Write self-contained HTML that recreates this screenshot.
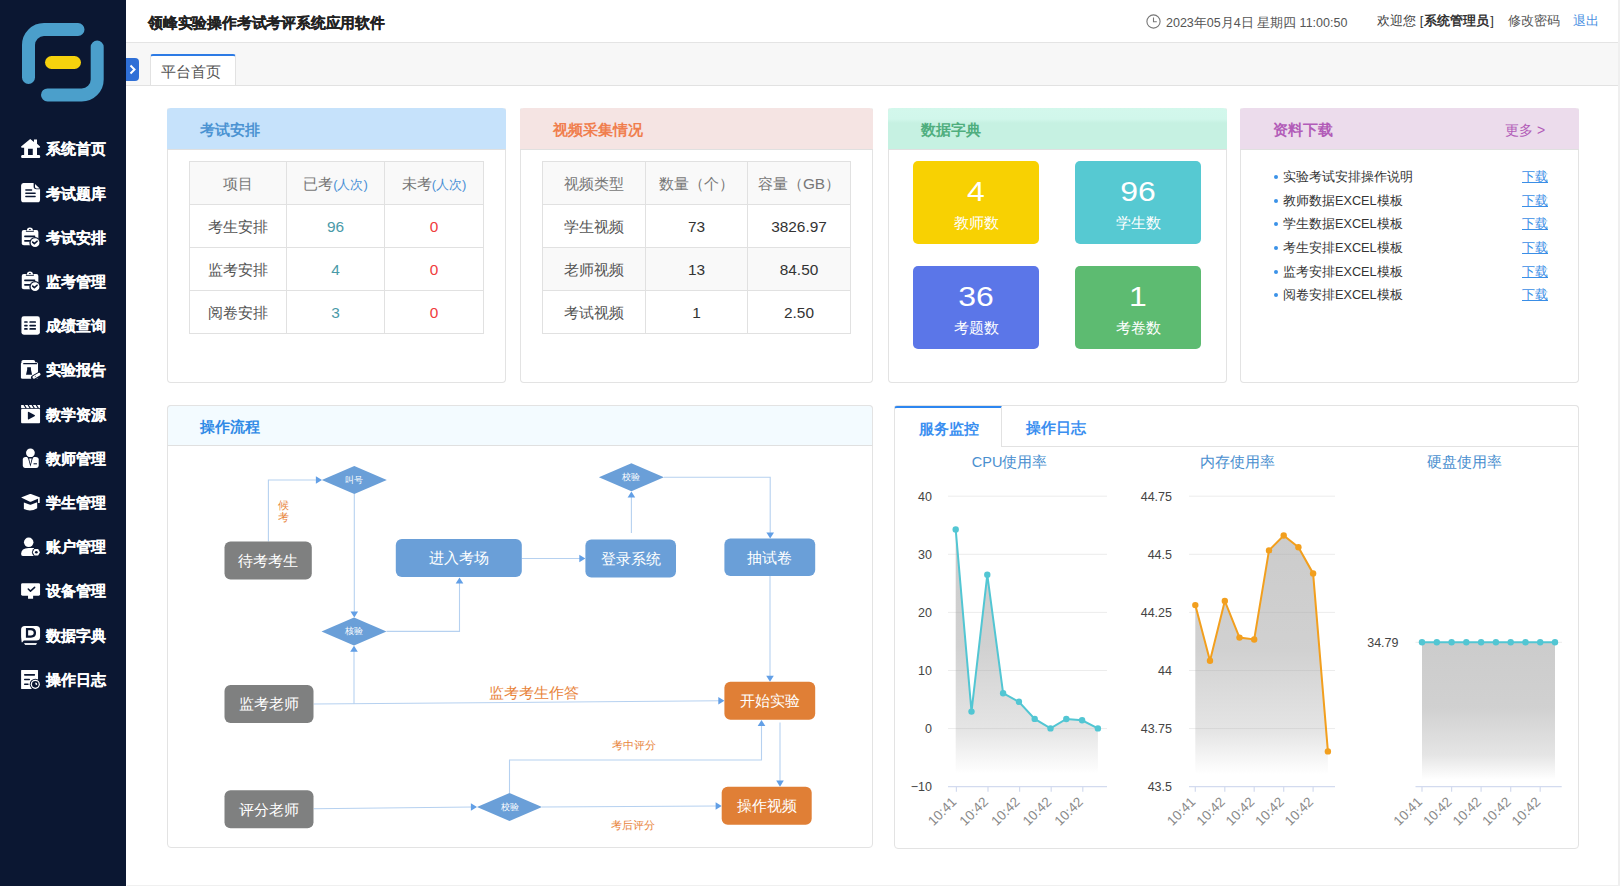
<!DOCTYPE html>
<html><head><meta charset="utf-8">
<style>
*{margin:0;padding:0;box-sizing:border-box}
html,body{width:1620px;height:886px;overflow:hidden;background:#fff;font-family:"Liberation Sans",sans-serif;color:#333}
.abs{position:absolute}
#side{position:absolute;left:0;top:0;width:126px;height:886px;background:#0b1732}
.mi{position:absolute;left:20px;height:20px;color:#fff;font-weight:bold;font-size:14.7px;-webkit-text-stroke:0.2px #fff;line-height:20px;white-space:nowrap}
.mi svg{position:absolute;left:0;top:0}
.mi span{position:absolute;left:26px;top:1px}
#hdr{position:absolute;left:126px;top:0;width:1494px;height:43px;background:#fff;border-bottom:1px solid #e4e4e4}
#tabs{position:absolute;left:126px;top:43px;width:1494px;height:43px;background:#f7f7f7;border-bottom:1px solid #e2e2e2}
.card{position:absolute;border:1px solid #e3e3e3;border-radius:4px;background:#fff}
.ch{position:absolute;left:-1px;top:0;right:-1px;height:42px;border-bottom:1px solid #e0e0e0;border-radius:4px 4px 0 0}
.ct{position:absolute;left:33px;top:13px;font-size:14.7px;font-weight:bold;line-height:18px;white-space:nowrap}
table{border-collapse:collapse;position:absolute;font-size:15.4px;color:#555}
td{border:1px solid #e1e1e1;text-align:center;height:43px;padding:2px 0 0}
tr.g td{background:#f9f9f9}
.tile{position:absolute;width:126px;height:83px;border-radius:5px;color:#fff;text-align:center}
.tn{position:absolute;left:0;right:0;top:15px;font-size:28px;line-height:32px;transform:scaleX(1.14)}
.tl{position:absolute;left:0;right:0;top:52px;font-size:15px;line-height:20px}
.dl{position:absolute;left:42px;font-size:12.7px;color:#333;line-height:18px;white-space:nowrap}
.dl:before{content:"";position:absolute;left:-9px;top:7px;width:4px;height:4px;border-radius:2px;background:#3a92e8}
.dl:after{content:"下载";position:absolute;left:239px;top:0;color:#3a8ee6;text-decoration:underline}
</style></head><body>
<div id="side">
<svg class="abs" style="left:0;top:0" width="127" height="120">
<path d="M78 29.5 H44 A15.5 15.5 0 0 0 28.5 45 V77.5" fill="none" stroke="#4b9fcb" stroke-width="13" stroke-linecap="round"/>
<path d="M47.5 94.9 H81.7 A15.5 15.5 0 0 0 97.2 79.4 V47" fill="none" stroke="#4b9fcb" stroke-width="13" stroke-linecap="round"/>
<rect x="45" y="56" width="36" height="13" rx="6.5" fill="#f6d20d"/>
</svg>
<!--ICONS--><svg class="abs" style="left:15px;top:133px" width="30" height="30" viewBox="0 0 886 886"><path d="M180 400 L450 180 L560 265 V195 H650 V320 L740 400 Q755 432 715 432 H650 V650 H715 Q745 650 745 695 Q745 740 715 740 H210 Q180 740 180 695 Q180 650 210 650 H270 V432 H205 Q165 432 180 400 Z M385 465 H525 V650 H385 Z" fill="#fff" fill-rule="evenodd"/></svg>
<svg class="abs" style="left:15px;top:178px" width="30" height="30" viewBox="0 0 886 886"><path d="M250 150 H550 V250 Q550 330 630 330 H740 V640 Q740 715 665 715 H255 Q180 715 180 640 V225 Q180 150 250 150 Z" fill="#fff"/><path d="M590 180 L730 310 H640 Q590 310 590 260 Z" fill="#fff"/><rect x="300" y="330" width="210" height="45" rx="20" fill="#0b1732"/><rect x="300" y="425" width="315" height="45" rx="20" fill="#0b1732"/><rect x="300" y="525" width="315" height="45" rx="20" fill="#0b1732"/></svg>
<svg class="abs" style="left:15px;top:222px" width="30" height="30" viewBox="0 0 886 886"><rect x="200" y="235" width="490" height="455" rx="60" fill="#fff"/><rect x="320" y="250" width="240" height="38" rx="12" fill="#0b1732"/><path d="M350 258 Q350 160 440 160 Q530 160 530 258 Z" fill="#fff"/><ellipse cx="440" cy="222" rx="32" ry="16" fill="#0b1732"/><rect x="270" y="400" width="330" height="50" rx="20" fill="#0b1732"/><rect x="270" y="530" width="180" height="50" rx="20" fill="#0b1732"/><circle cx="592" cy="612" r="168" fill="#0b1732"/><circle cx="592" cy="612" r="130" fill="#fff"/><path d="M522 592 L572 640 L652 568" fill="none" stroke="#0b1732" stroke-width="48" stroke-linecap="round" stroke-linejoin="round"/></svg>
<svg class="abs" style="left:15px;top:266px" width="30" height="30" viewBox="0 0 886 886"><rect x="200" y="235" width="490" height="455" rx="60" fill="#fff"/><rect x="320" y="250" width="240" height="38" rx="12" fill="#0b1732"/><path d="M350 258 Q350 160 440 160 Q530 160 530 258 Z" fill="#fff"/><ellipse cx="440" cy="222" rx="32" ry="16" fill="#0b1732"/><rect x="270" y="400" width="330" height="50" rx="20" fill="#0b1732"/><rect x="270" y="530" width="180" height="50" rx="20" fill="#0b1732"/><circle cx="592" cy="612" r="168" fill="#0b1732"/><circle cx="592" cy="612" r="130" fill="#fff"/><path d="M522 592 L572 640 L652 568" fill="none" stroke="#0b1732" stroke-width="48" stroke-linecap="round" stroke-linejoin="round"/></svg>
<svg class="abs" style="left:15px;top:310px" width="30" height="30" viewBox="0 0 886 886"><rect x="190" y="185" width="545" height="545" rx="70" fill="#fff"/><rect x="270" y="330" width="105" height="50" rx="18" fill="#0b1732"/><rect x="425" y="330" width="195" height="50" rx="18" fill="#0b1732"/><rect x="270" y="432" width="105" height="53" rx="18" fill="#0b1732"/><rect x="425" y="432" width="195" height="53" rx="18" fill="#0b1732"/><rect x="270" y="535" width="105" height="50" rx="18" fill="#0b1732"/><rect x="425" y="535" width="195" height="50" rx="18" fill="#0b1732"/></svg>
<svg class="abs" style="left:15px;top:355px" width="30" height="30" viewBox="0 0 886 886"><rect x="190" y="145" width="405" height="110" rx="55" fill="#fff"/><rect x="175" y="215" width="505" height="490" rx="45" fill="#fff"/><path d="M175 260 Q175 215 240 215 H600" fill="none" stroke="#fff" stroke-width="1"/><rect x="240" y="238" width="415" height="36" rx="18" fill="#0b1732"/><path d="M360 360 H470 V425 L505 585 H325 L360 425 Z" fill="#0b1732"/><path d="M548 668 L712 572" stroke="#0b1732" stroke-width="150" stroke-linecap="round"/><path d="M560 660 L712 572" stroke="#fff" stroke-width="85" stroke-linecap="round"/><path d="M585 645 L615 628" stroke="#0b1732" stroke-width="20"/></svg>
<svg class="abs" style="left:15px;top:399px" width="30" height="30" viewBox="0 0 886 886"><rect x="180" y="175" width="560" height="95" rx="10" fill="#fff"/><path d="M250 175 L310 270 H350 L290 175 Z M370 175 L430 270 H470 L410 175 Z M490 175 L550 270 H590 L530 175 Z M610 175 L670 270 H710 L650 175 Z" fill="#0b1732"/><rect x="180" y="295" width="560" height="420" rx="25" fill="#fff"/><path d="M380 400 Q380 365 412 382 L578 470 Q605 488 578 506 L412 598 Q380 615 380 580 Z" fill="#0b1732"/></svg>
<svg class="abs" style="left:15px;top:443px" width="30" height="30" viewBox="0 0 886 886"><circle cx="455" cy="290" r="130" fill="#fff"/><path d="M230 490 Q230 415 310 415 H610 Q700 415 700 490 V660 Q700 735 625 735 H305 Q230 735 230 660 Z" fill="#fff"/><path d="M358 415 H552 L520 468 L455 700 L390 468 Z" fill="#0b1732"/><path d="M418 458 H492 L455 625 Z" fill="#fff"/><rect x="548" y="598" width="100" height="32" fill="#0b1732"/></svg>
<svg class="abs" style="left:15px;top:487px" width="30" height="30" viewBox="0 0 886 886"><path d="M195 318 Q175 310 195 300 L440 208 Q455 203 470 208 L725 305 Q745 315 725 325 L470 432 Q455 438 440 432 Z" fill="#fff"/><rect x="680" y="315" width="50" height="160" rx="10" fill="#fff"/><path d="M262 455 L445 522 Q455 526 465 522 L655 452 V628 Q460 745 262 650 Z" fill="#fff"/></svg>
<svg class="abs" style="left:15px;top:531px" width="30" height="30" viewBox="0 0 886 886"><circle cx="405" cy="335" r="140" fill="#fff"/><path d="M180 680 Q180 500 405 500 H560 V738 H230 Q180 738 180 680 Z" fill="#fff"/><circle cx="630" cy="628" r="128" fill="#0b1732"/><path d="M630 520 L723 574 V682 L630 736 L537 682 V574 Z" fill="#fff" transform="rotate(30 630 628) translate(0 0)"/><circle cx="630" cy="628" r="40" fill="#0b1732"/></svg>
<svg class="abs" style="left:15px;top:575px" width="30" height="30" viewBox="0 0 886 886"><rect x="180" y="240" width="560" height="370" rx="40" fill="#fff"/><rect x="385" y="590" width="150" height="115" rx="10" fill="#fff"/><path d="M392 412 L457 476 L580 365" fill="none" stroke="#0b1732" stroke-width="45" stroke-linecap="round" stroke-linejoin="round"/></svg>
<svg class="abs" style="left:15px;top:620px" width="30" height="30" viewBox="0 0 886 886"><path d="M290 175 H630 Q740 175 740 285 V500 Q740 605 630 605 H260 L215 660 Q200 675 195 640 L180 500 V285 Q180 175 290 175 Z" fill="#fff"/><path d="M265 680 H650 L620 735 H300 Z" fill="#e6e8ec"/><path d="M322 235 H470 Q622 235 622 380 Q622 525 470 525 H322 Z M388 300 V460 H465 Q552 460 552 380 Q552 300 465 300 Z" fill="#0b1732" fill-rule="evenodd"/></svg>
<svg class="abs" style="left:15px;top:664px" width="30" height="30" viewBox="0 0 886 886"><rect x="180" y="175" width="500" height="560" rx="15" fill="#fff"/><rect x="265" y="295" width="330" height="50" rx="25" fill="#0b1732"/><rect x="265" y="435" width="180" height="42" rx="20" fill="#0b1732"/><rect x="265" y="575" width="140" height="42" rx="20" fill="#0b1732"/><circle cx="600" cy="600" r="165" fill="#0b1732"/><circle cx="600" cy="600" r="135" fill="#fff"/><circle cx="600" cy="600" r="98" fill="#0b1732"/><path d="M600 600 V545 A55 55 0 0 1 650 625 Z" fill="#fff"/></svg><!--/ICONS-->
<div class="mi" style="top:138px"><span>系统首页</span></div>
<div class="mi" style="top:183px"><span>考试题库</span></div>
<div class="mi" style="top:227px"><span>考试安排</span></div>
<div class="mi" style="top:271px"><span>监考管理</span></div>
<div class="mi" style="top:315px"><span>成绩查询</span></div>
<div class="mi" style="top:359px"><span>实验报告</span></div>
<div class="mi" style="top:404px"><span>教学资源</span></div>
<div class="mi" style="top:448px"><span>教师管理</span></div>
<div class="mi" style="top:492px"><span>学生管理</span></div>
<div class="mi" style="top:536px"><span>账户管理</span></div>
<div class="mi" style="top:580px"><span>设备管理</span></div>
<div class="mi" style="top:625px"><span>数据字典</span></div>
<div class="mi" style="top:669px"><span>操作日志</span></div>
</div>
<div id="hdr">
<div class="abs" style="left:22px;top:13px;font-size:15px;transform:scaleX(0.987);transform-origin:0 0;font-weight:bold;color:#222;-webkit-text-stroke:0.2px #222;line-height:20px;white-space:nowrap">领峰实验操作考试考评系统应用软件</div>
<svg class="abs" style="left:1020px;top:14px" width="15" height="15" viewBox="0 0 15 15"><circle cx="7.5" cy="7.5" r="6.6" fill="none" stroke="#777" stroke-width="1.1"/><path d="M7.5 3.5 V7.8 H10.8" fill="none" stroke="#777" stroke-width="1.1"/></svg>
<div class="abs" style="left:1040px;top:14px;font-size:12.5px;color:#555;line-height:18px;white-space:nowrap">2023年05月4日 星期四 11:00:50</div>
<div class="abs" style="left:1251px;top:12px;font-size:13px;color:#444;line-height:18px;white-space:nowrap">欢迎您 <span style="color:#333">[<b style="margin:0 1px">系统管理员</b>]</span></div>
<div class="abs" style="left:1382px;top:12px;font-size:13px;color:#555;line-height:18px;white-space:nowrap">修改密码</div>
<div class="abs" style="left:1447px;top:12px;font-size:13px;color:#4a90e2;line-height:18px;white-space:nowrap">退出</div>
</div>
<div id="tabs">
<div class="abs" style="left:0px;top:15px;width:13px;height:23px;background:#2f6fd6;border-radius:0 4px 4px 0"></div>
<svg class="abs" style="left:3px;top:21px" width="8" height="11" viewBox="0 0 8 11"><path d="M1.5 1.5 L5.5 5.5 L1.5 9.5" fill="none" stroke="#fff" stroke-width="2"/></svg>
<div class="abs" style="left:24px;top:11px;width:86px;height:32px;background:#fff;border:1px solid #e2e2e2;border-top:2px solid #2d7be5;border-radius:3px 3px 0 0"></div>
<div class="abs" style="left:35px;top:19px;font-size:15px;color:#555;line-height:20px;white-space:nowrap">平台首页</div>
</div>

<!-- card1 -->
<div class="card" style="left:167px;top:107px;width:339px;height:276px;border-top-color:transparent">
 <div class="ch" style="background:#c6e2fb"><div class="ct" style="color:#4b93d2">考试安排</div></div>
 <table style="left:21px;top:53px;width:295px">
  <tr class="g"><td style="width:97px;color:#777">项目</td><td style="width:98px;color:#777">已考<span style="color:#4a90d6;font-size:13px">(人次)</span></td><td style="color:#777">未考<span style="color:#4a90d6;font-size:13px">(人次)</span></td></tr>
  <tr><td>考生安排</td><td style="color:#4a9aa8">96</td><td style="color:#f03c3c">0</td></tr>
  <tr><td>监考安排</td><td style="color:#4a9aa8">4</td><td style="color:#f03c3c">0</td></tr>
  <tr><td>阅卷安排</td><td style="color:#4a9aa8">3</td><td style="color:#f03c3c">0</td></tr>
 </table>
</div>
<!-- card2 -->
<div class="card" style="left:520px;top:107px;width:353px;height:276px;border-top-color:transparent">
 <div class="ch" style="background:#f5e4e3"><div class="ct" style="color:#f07e4e">视频采集情况</div></div>
 <table style="left:21px;top:53px;width:309px">
  <tr class="g"><td style="width:103px;color:#777">视频类型</td><td style="width:102px;color:#777">数量（个）</td><td style="color:#777">容量（GB）</td></tr>
  <tr><td>学生视频</td><td style="color:#333">73</td><td style="color:#333">3826.97</td></tr>
  <tr class="g"><td>老师视频</td><td style="color:#333">13</td><td style="color:#333">84.50</td></tr>
  <tr><td>考试视频</td><td style="color:#333">1</td><td style="color:#333">2.50</td></tr>
 </table>
</div>
<!-- card3 -->
<div class="card" style="left:888px;top:107px;width:339px;height:276px;border-top-color:transparent">
 <div class="ch" style="background:linear-gradient(#d3f8ec 0,#d1f7eb 11px,#c6f1e2 15px)"><div class="ct" style="color:#4fae7e">数据字典</div></div>
 <div class="tile" style="left:24px;top:53px;background:#f8d102"><div class="tn">4</div><div class="tl">教师数</div></div>
 <div class="tile" style="left:186px;top:53px;background:#56c9d2"><div class="tn">96</div><div class="tl">学生数</div></div>
 <div class="tile" style="left:24px;top:158px;background:#5b76e8"><div class="tn">36</div><div class="tl">考题数</div></div>
 <div class="tile" style="left:186px;top:158px;background:#5dbb71"><div class="tn">1</div><div class="tl">考卷数</div></div>
</div>
<!-- card4 -->
<div class="card" style="left:1240px;top:107px;width:339px;height:276px;border-top-color:transparent">
 <div class="ch" style="background:#ecdcec"><div class="ct" style="color:#b25cb8">资料下载</div><div class="abs" style="left:265px;top:13px;font-size:14px;color:#b25cb8;line-height:18px;white-space:nowrap">更多 &gt;</div></div>
 <div class="dl" style="top:60px">实验考试安排操作说明</div>
 <div class="dl" style="top:84px">教师数据EXCEL模板</div>
 <div class="dl" style="top:107px">学生数据EXCEL模板</div>
 <div class="dl" style="top:131px">考生安排EXCEL模板</div>
 <div class="dl" style="top:155px">监考安排EXCEL模板</div>
 <div class="dl" style="top:178px">阅卷安排EXCEL模板</div>
</div>
<!-- card5 -->
<div class="card" style="left:167px;top:405px;width:706px;height:443px">
 <div class="ch" style="top:-1px;background:#f3fbff;height:41px;border-top:1px solid #e3e3e3;border-left:1px solid #e3e3e3;border-right:1px solid #e3e3e3"><div class="ct" style="color:#2f8ae6;top:12px;left:32px">操作流程</div></div>
</div>
<!-- card6 -->
<div class="card" style="left:894px;top:405px;width:685px;height:444px">
 <div class="ch" style="top:-1px;background:#fff;height:42px;border:1px solid #e3e3e3;border-bottom:1px solid #e2e2e2"></div>
 <div class="abs" style="left:-1px;top:0;width:108px;height:41px;background:#fff;border-top:2px solid #2d86f0;border-right:1px solid #e2e2e2;border-left:1px solid #e3e3e3;border-radius:3px 0 0 0"></div>
 <div class="ct" style="left:24px;top:14px;color:#3b8ff0">服务监控</div>
 <div class="ct" style="left:131px;top:13px;color:#3b8ff0">操作日志</div>
</div>
<div class="abs" style="left:1618px;top:0;width:2px;height:886px;background:#efefef"></div>
<div class="abs" style="left:127px;top:885px;width:1493px;height:1px;background:#f0f0f0"></div>
<!--SVG--><svg class="abs" style="left:0;top:0;pointer-events:none" width="1620" height="886" font-family="Liberation Sans, sans-serif">
<path d="M268.4 541.5 L268.4 480 L318 480" fill="none" stroke="#b6d1f0" stroke-width="1.1"/>
<path d="M322.0 480.0 L315.9 476.2 L315.9 483.8 Z" fill="#629fe6"/>
<path d="M354.3 494 L354.3 613" fill="none" stroke="#b6d1f0" stroke-width="1.1"/>
<path d="M354.3 617.5 L350.5 611.4 L358.1 611.4 Z" fill="#629fe6"/>
<path d="M386.5 631.4 L459.5 631.4 L459.5 582" fill="none" stroke="#b6d1f0" stroke-width="1.1"/>
<path d="M459.5 577.5 L455.7 583.6 L463.3 583.6 Z" fill="#629fe6"/>
<path d="M521.7 558.5 L581 558.5" fill="none" stroke="#b6d1f0" stroke-width="1.1"/>
<path d="M585.4 558.5 L579.3 554.7 L579.3 562.3 Z" fill="#629fe6"/>
<path d="M631.4 533 L631.4 496" fill="none" stroke="#b6d1f0" stroke-width="1.1"/>
<path d="M631.4 491.5 L627.6 497.6 L635.2 497.6 Z" fill="#629fe6"/>
<path d="M664 477.2 L770.2 477.2 L770.2 534" fill="none" stroke="#b6d1f0" stroke-width="1.1"/>
<path d="M770.2 538.5 L766.4 532.4 L774.0 532.4 Z" fill="#629fe6"/>
<path d="M770 576 L770 677" fill="none" stroke="#b6d1f0" stroke-width="1.1"/>
<path d="M770.0 681.8 L766.2 675.7 L773.8 675.7 Z" fill="#629fe6"/>
<path d="M313.7 704 L720 700.8" fill="none" stroke="#b6d1f0" stroke-width="1.1"/>
<path d="M724.4 700.8 L718.3 697.0 L718.3 704.6 Z" fill="#629fe6"/>
<path d="M354 704 L354 650" fill="none" stroke="#b6d1f0" stroke-width="1.1"/>
<path d="M354.0 645.7 L350.2 651.8 L357.8 651.8 Z" fill="#629fe6"/>
<path d="M313.7 808.7 L473 807" fill="none" stroke="#b6d1f0" stroke-width="1.1"/>
<path d="M477.0 807.0 L470.9 803.2 L470.9 810.8 Z" fill="#629fe6"/>
<path d="M509.5 793 L509.5 760 L761.5 760 L761.5 724.5" fill="none" stroke="#b6d1f0" stroke-width="1.1"/>
<path d="M761.5 720.0 L757.7 726.1 L765.3 726.1 Z" fill="#629fe6"/>
<path d="M780 722.4 L780 782" fill="none" stroke="#b6d1f0" stroke-width="1.1"/>
<path d="M780.0 786.7 L776.2 780.6 L783.8 780.6 Z" fill="#629fe6"/>
<path d="M542 807 L717 806" fill="none" stroke="#b6d1f0" stroke-width="1.1"/>
<path d="M721.7 806.0 L715.6 802.2 L715.6 809.8 Z" fill="#629fe6"/>
<rect x="224.5" y="541.5" width="87.3" height="38" rx="6" fill="#7f8080"/>
<text x="268.15" y="565.8" font-size="15" fill="#fff" text-anchor="middle">待考考生</text>
<rect x="395.8" y="539" width="126" height="38" rx="6" fill="#6a9fd8"/>
<text x="458.8" y="563.3" font-size="15" fill="#fff" text-anchor="middle">进入考场</text>
<rect x="585.4" y="539.6" width="90.6" height="38" rx="6" fill="#6a9fd8"/>
<text x="630.6999999999999" y="563.9" font-size="15" fill="#fff" text-anchor="middle">登录系统</text>
<rect x="724.4" y="538.5" width="90.8" height="37.5" rx="6" fill="#6a9fd8"/>
<text x="769.8" y="562.55" font-size="15" fill="#fff" text-anchor="middle">抽试卷</text>
<rect x="224.5" y="685" width="89" height="38" rx="6" fill="#7f8080"/>
<text x="269.0" y="709.3" font-size="15" fill="#fff" text-anchor="middle">监考老师</text>
<rect x="224.5" y="790.2" width="89" height="38" rx="6" fill="#7f8080"/>
<text x="269.0" y="814.5" font-size="15" fill="#fff" text-anchor="middle">评分老师</text>
<rect x="724.4" y="681.8" width="90.8" height="38" rx="6" fill="#e07f36"/>
<text x="769.8" y="706.0999999999999" font-size="15" fill="#fff" text-anchor="middle">开始实验</text>
<rect x="721.7" y="786.7" width="90" height="38" rx="6" fill="#e07f36"/>
<text x="766.7" y="811.0" font-size="15" fill="#fff" text-anchor="middle">操作视频</text>
<path d="M321.8 480 L354.3 466.0 L386.8 480 L354.3 494.0 Z" fill="#6a9fd8"/>
<text x="354.3" y="483" font-size="8.5" fill="#fff" text-anchor="middle">叫号</text>
<path d="M321.5 631.4 L354 617.4 L386.5 631.4 L354 645.4 Z" fill="#6a9fd8"/>
<text x="354" y="634.4" font-size="8.5" fill="#fff" text-anchor="middle">核验</text>
<path d="M598.9 477.2 L631.4 463.2 L663.9 477.2 L631.4 491.2 Z" fill="#6a9fd8"/>
<text x="631.4" y="480.2" font-size="8.5" fill="#fff" text-anchor="middle">校验</text>
<path d="M477.0 807 L509.5 793.0 L542.0 807 L509.5 821.0 Z" fill="#6a9fd8"/>
<text x="509.5" y="810" font-size="8.5" fill="#fff" text-anchor="middle">校验</text>
<text x="283.5" y="509" font-size="10.5" fill="#e8843c" text-anchor="middle">候</text>
<text x="283.5" y="521" font-size="10.5" fill="#e8843c" text-anchor="middle">考</text>
<text x="533.8" y="698" font-size="15" fill="#e8843c" text-anchor="middle">监考考生作答</text>
<text x="634" y="749" font-size="11" fill="#e8843c" text-anchor="middle">考中评分</text>
<text x="633" y="828.6" font-size="11" fill="#e8843c" text-anchor="middle">考后评分</text>
<text x="1009.6" y="467" font-size="14.5" fill="#4a8fcf" text-anchor="middle">CPU使用率</text>
<text x="932" y="500.7" font-size="12.5" fill="#444" text-anchor="end">40</text>
<text x="932" y="558.8" font-size="12.5" fill="#444" text-anchor="end">30</text>
<text x="932" y="616.9" font-size="12.5" fill="#444" text-anchor="end">20</text>
<text x="932" y="675.0" font-size="12.5" fill="#444" text-anchor="end">10</text>
<text x="932" y="733.1" font-size="12.5" fill="#444" text-anchor="end">0</text>
<text x="932" y="791.2" font-size="12.5" fill="#444" text-anchor="end">−10</text>
<path d="M948 496.2 H1107" stroke="#ececec" stroke-width="1"/>
<path d="M948 554.3 H1107" stroke="#ececec" stroke-width="1"/>
<path d="M948 612.4 H1107" stroke="#ececec" stroke-width="1"/>
<path d="M948 670.5 H1107" stroke="#ececec" stroke-width="1"/>
<path d="M948 728.6 H1107" stroke="#ececec" stroke-width="1"/>
<path d="M948 786.7 H1107" stroke="#d3dbef" stroke-width="1.2"/>
<path d="M956.4 786.7 V791.7" stroke="#d3dbef" stroke-width="1.2"/>
<text transform="translate(957.4,802.7) rotate(-45)" font-size="13.5" fill="#8a8a8a" text-anchor="end">10:41</text>
<path d="M988 786.7 V791.7" stroke="#d3dbef" stroke-width="1.2"/>
<text transform="translate(989,802.7) rotate(-45)" font-size="13.5" fill="#8a8a8a" text-anchor="end">10:42</text>
<path d="M1019.6 786.7 V791.7" stroke="#d3dbef" stroke-width="1.2"/>
<text transform="translate(1020.6,802.7) rotate(-45)" font-size="13.5" fill="#8a8a8a" text-anchor="end">10:42</text>
<path d="M1051.2 786.7 V791.7" stroke="#d3dbef" stroke-width="1.2"/>
<text transform="translate(1052.2,802.7) rotate(-45)" font-size="13.5" fill="#8a8a8a" text-anchor="end">10:42</text>
<path d="M1082.8 786.7 V791.7" stroke="#d3dbef" stroke-width="1.2"/>
<text transform="translate(1083.8,802.7) rotate(-45)" font-size="13.5" fill="#8a8a8a" text-anchor="end">10:42</text>
<defs><linearGradient id="g1" x1="0" y1="0" x2="0" y2="1"><stop offset="0" stop-color="#a2a2a2" stop-opacity="0.55"/><stop offset="0.45" stop-color="#a2a2a2" stop-opacity="0.5"/><stop offset="0.78" stop-color="#a2a2a2" stop-opacity="0.28"/><stop offset="0.95" stop-color="#a2a2a2" stop-opacity="0"/></linearGradient></defs>
<path d="M955.7 786.7 L955.7 529.5 L971.5 711.6 L987.3 574.8 L1003.1 693.2 L1018.9 701.8 L1034.7 718.9 L1050.5 728.4 L1066.3 719.0 L1082.1 720.3 L1097.9 728.4 L1097.9 786.7 Z" fill="url(#g1)"/>
<path d="M955.7 529.5 L971.5 711.6 L987.3 574.8 L1003.1 693.2 L1018.9 701.8 L1034.7 718.9 L1050.5 728.4 L1066.3 719.0 L1082.1 720.3 L1097.9 728.4" fill="none" stroke="#52c6d3" stroke-width="2"/>
<circle cx="955.7" cy="529.5" r="3.2" fill="#52c6d3"/>
<circle cx="971.5" cy="711.6" r="3.2" fill="#52c6d3"/>
<circle cx="987.3" cy="574.8" r="3.2" fill="#52c6d3"/>
<circle cx="1003.1" cy="693.2" r="3.2" fill="#52c6d3"/>
<circle cx="1018.9" cy="701.8" r="3.2" fill="#52c6d3"/>
<circle cx="1034.7" cy="718.9" r="3.2" fill="#52c6d3"/>
<circle cx="1050.5" cy="728.4" r="3.2" fill="#52c6d3"/>
<circle cx="1066.3" cy="719.0" r="3.2" fill="#52c6d3"/>
<circle cx="1082.1" cy="720.3" r="3.2" fill="#52c6d3"/>
<circle cx="1097.9" cy="728.4" r="3.2" fill="#52c6d3"/>
<text x="1237.6" y="467" font-size="14.5" fill="#4a8fcf" text-anchor="middle">内存使用率</text>
<text x="1172" y="500.7" font-size="12.5" fill="#444" text-anchor="end">44.75</text>
<text x="1172" y="558.8" font-size="12.5" fill="#444" text-anchor="end">44.5</text>
<text x="1172" y="616.9" font-size="12.5" fill="#444" text-anchor="end">44.25</text>
<text x="1172" y="675.0" font-size="12.5" fill="#444" text-anchor="end">44</text>
<text x="1172" y="733.1" font-size="12.5" fill="#444" text-anchor="end">43.75</text>
<text x="1172" y="791.2" font-size="12.5" fill="#444" text-anchor="end">43.5</text>
<path d="M1189 496.2 H1335" stroke="#ececec" stroke-width="1"/>
<path d="M1189 554.3 H1335" stroke="#ececec" stroke-width="1"/>
<path d="M1189 612.4 H1335" stroke="#ececec" stroke-width="1"/>
<path d="M1189 670.5 H1335" stroke="#ececec" stroke-width="1"/>
<path d="M1189 728.6 H1335" stroke="#ececec" stroke-width="1"/>
<path d="M1189 786.7 H1335" stroke="#d3dbef" stroke-width="1.2"/>
<path d="M1195.3 786.7 V791.7" stroke="#d3dbef" stroke-width="1.2"/>
<text transform="translate(1196.3,802.7) rotate(-45)" font-size="13.5" fill="#8a8a8a" text-anchor="end">10:41</text>
<path d="M1224.8 786.7 V791.7" stroke="#d3dbef" stroke-width="1.2"/>
<text transform="translate(1225.8,802.7) rotate(-45)" font-size="13.5" fill="#8a8a8a" text-anchor="end">10:42</text>
<path d="M1254.2 786.7 V791.7" stroke="#d3dbef" stroke-width="1.2"/>
<text transform="translate(1255.2,802.7) rotate(-45)" font-size="13.5" fill="#8a8a8a" text-anchor="end">10:42</text>
<path d="M1283.7 786.7 V791.7" stroke="#d3dbef" stroke-width="1.2"/>
<text transform="translate(1284.7,802.7) rotate(-45)" font-size="13.5" fill="#8a8a8a" text-anchor="end">10:42</text>
<path d="M1313.1 786.7 V791.7" stroke="#d3dbef" stroke-width="1.2"/>
<text transform="translate(1314.1,802.7) rotate(-45)" font-size="13.5" fill="#8a8a8a" text-anchor="end">10:42</text>
<defs><linearGradient id="g2" x1="0" y1="0" x2="0" y2="1"><stop offset="0" stop-color="#a2a2a2" stop-opacity="0.55"/><stop offset="0.45" stop-color="#a2a2a2" stop-opacity="0.5"/><stop offset="0.78" stop-color="#a2a2a2" stop-opacity="0.28"/><stop offset="0.95" stop-color="#a2a2a2" stop-opacity="0"/></linearGradient></defs>
<path d="M1195.3 786.7 L1195.3 605.1 L1210.0 660.7 L1224.8 601.0 L1239.5 637.6 L1254.2 639.5 L1269.0 550.4 L1283.7 535.5 L1298.4 547.2 L1313.1 573.4 L1327.9 751.4 L1327.87 786.7 Z" fill="url(#g2)"/>
<path d="M1195.3 605.1 L1210.0 660.7 L1224.8 601.0 L1239.5 637.6 L1254.2 639.5 L1269.0 550.4 L1283.7 535.5 L1298.4 547.2 L1313.1 573.4 L1327.9 751.4" fill="none" stroke="#f29f1e" stroke-width="2"/>
<circle cx="1195.3" cy="605.1" r="3.2" fill="#f29f1e"/>
<circle cx="1210.0" cy="660.7" r="3.2" fill="#f29f1e"/>
<circle cx="1224.8" cy="601.0" r="3.2" fill="#f29f1e"/>
<circle cx="1239.5" cy="637.6" r="3.2" fill="#f29f1e"/>
<circle cx="1254.2" cy="639.5" r="3.2" fill="#f29f1e"/>
<circle cx="1269.0" cy="550.4" r="3.2" fill="#f29f1e"/>
<circle cx="1283.7" cy="535.5" r="3.2" fill="#f29f1e"/>
<circle cx="1298.4" cy="547.2" r="3.2" fill="#f29f1e"/>
<circle cx="1313.1" cy="573.4" r="3.2" fill="#f29f1e"/>
<circle cx="1327.9" cy="751.4" r="3.2" fill="#f29f1e"/>
<text x="1398.5" y="646.8" font-size="12.5" fill="#444" text-anchor="end">34.79</text>
<path d="M1415.5 642.3 H1562" stroke="#ececec" stroke-width="1"/>
<text x="1464.6" y="467" font-size="14.5" fill="#4a8fcf" text-anchor="middle">硬盘使用率</text>
<path d="M1415.5 786.7 H1561.7" stroke="#d3dbef" stroke-width="1.2"/>
<path d="M1422 786.7 V791.7" stroke="#d3dbef" stroke-width="1.2"/>
<text transform="translate(1423,802.7) rotate(-45)" font-size="13.5" fill="#8a8a8a" text-anchor="end">10:41</text>
<path d="M1451.6 786.7 V791.7" stroke="#d3dbef" stroke-width="1.2"/>
<text transform="translate(1452.6,802.7) rotate(-45)" font-size="13.5" fill="#8a8a8a" text-anchor="end">10:42</text>
<path d="M1481.1 786.7 V791.7" stroke="#d3dbef" stroke-width="1.2"/>
<text transform="translate(1482.1,802.7) rotate(-45)" font-size="13.5" fill="#8a8a8a" text-anchor="end">10:42</text>
<path d="M1510.7 786.7 V791.7" stroke="#d3dbef" stroke-width="1.2"/>
<text transform="translate(1511.7,802.7) rotate(-45)" font-size="13.5" fill="#8a8a8a" text-anchor="end">10:42</text>
<path d="M1540.2 786.7 V791.7" stroke="#d3dbef" stroke-width="1.2"/>
<text transform="translate(1541.2,802.7) rotate(-45)" font-size="13.5" fill="#8a8a8a" text-anchor="end">10:42</text>
<defs><linearGradient id="g3" x1="0" y1="0" x2="0" y2="1"><stop offset="0" stop-color="#a2a2a2" stop-opacity="0.55"/><stop offset="0.45" stop-color="#a2a2a2" stop-opacity="0.5"/><stop offset="0.78" stop-color="#a2a2a2" stop-opacity="0.28"/><stop offset="0.95" stop-color="#a2a2a2" stop-opacity="0"/></linearGradient></defs>
<path d="M1422.0 786.7 L1422.0 642.3 L1436.8 642.3 L1451.6 642.3 L1466.3 642.3 L1481.1 642.3 L1495.9 642.3 L1510.7 642.3 L1525.5 642.3 L1540.2 642.3 L1555.0 642.3 L1555.02 786.7 Z" fill="url(#g3)"/>
<path d="M1422.0 642.3 L1436.8 642.3 L1451.6 642.3 L1466.3 642.3 L1481.1 642.3 L1495.9 642.3 L1510.7 642.3 L1525.5 642.3 L1540.2 642.3 L1555.0 642.3" fill="none" stroke="#52c6d3" stroke-width="2"/>
<circle cx="1422.0" cy="642.3" r="3.2" fill="#52c6d3"/>
<circle cx="1436.8" cy="642.3" r="3.2" fill="#52c6d3"/>
<circle cx="1451.6" cy="642.3" r="3.2" fill="#52c6d3"/>
<circle cx="1466.3" cy="642.3" r="3.2" fill="#52c6d3"/>
<circle cx="1481.1" cy="642.3" r="3.2" fill="#52c6d3"/>
<circle cx="1495.9" cy="642.3" r="3.2" fill="#52c6d3"/>
<circle cx="1510.7" cy="642.3" r="3.2" fill="#52c6d3"/>
<circle cx="1525.5" cy="642.3" r="3.2" fill="#52c6d3"/>
<circle cx="1540.2" cy="642.3" r="3.2" fill="#52c6d3"/>
<circle cx="1555.0" cy="642.3" r="3.2" fill="#52c6d3"/>
</svg><!--/SVG-->
</body></html>
